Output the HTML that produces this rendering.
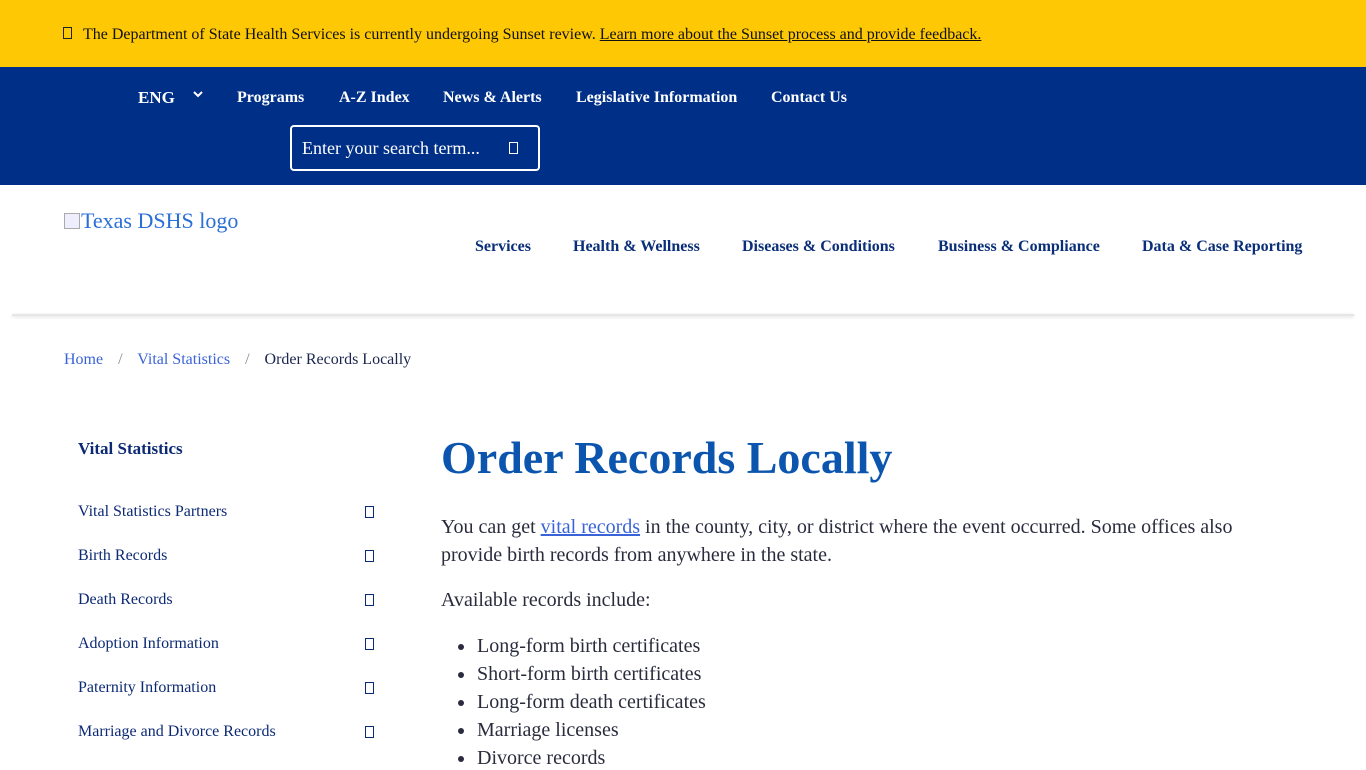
<!DOCTYPE html>
<html><head><meta charset="utf-8"><style>
*{margin:0;padding:0;box-sizing:border-box}
body{width:1366px;height:768px;overflow:hidden;font-family:"Liberation Serif",serif;background:#fff;position:relative}
.a{position:absolute;white-space:nowrap}
.box{position:absolute;width:9px;height:12px;border:1px solid currentColor}
#top{position:absolute;left:0;top:0;width:1366px;height:67px;background:#ffc805}
#nav{position:absolute;left:0;top:67px;width:1366px;height:118px;background:#002f87}
.n{color:#fff;font-weight:bold;font-size:16px;top:89px}
.m{color:#0a2f78;font-weight:bold;font-size:16px;top:238px}
.s{color:#0c2a74;font-size:16px;left:78px}
.li{font-size:20px;color:#2a2c3e;left:477px}
.dot{position:absolute;left:458px;width:6px;height:6px;border-radius:50%;background:#2a2c3e}
</style></head><body>
<div id="top"></div>
<div class="box" style="left:63px;top:27px;color:#222"></div>
<div class="a" style="left:83px;top:26px;font-size:16px;color:#111">The Department of State Health Services is currently undergoing Sunset review. <u>Learn more about the Sunset process and provide feedback.</u></div>
<div id="nav"></div>
<div class="a n" style="left:138px;top:88px;font-size:17px">ENG</div>
<svg class="a" style="left:193px;top:91px" width="10" height="8"><path d="M1 1l4 4 4-4" stroke="#fff" stroke-width="2" fill="none"/></svg>
<div class="a n" style="left:237px">Programs</div>
<div class="a n" style="left:339px">A-Z Index</div>
<div class="a n" style="left:443px">News &amp; Alerts</div>
<div class="a n" style="left:576px">Legislative Information</div>
<div class="a n" style="left:771px">Contact Us</div>
<div class="a" style="left:290px;top:125px;width:250px;height:46px;border:2px solid #fff;border-radius:4px"></div>
<div class="a" style="left:302px;top:138px;font-size:18px;color:#fff">Enter your search term...</div>
<div class="box" style="left:509px;top:142px;color:#fff"></div>
<div class="a" style="left:64px;top:208px;font-size:22px;color:#2a6fd6"><span style="display:inline-block;width:16px;height:16px;border:1px solid #aaa;background:#eef;vertical-align:-1px;margin-right:1px"></span>Texas DSHS logo</div>
<div class="a m" style="left:475px">Services</div>
<div class="a m" style="left:573px">Health &amp; Wellness</div>
<div class="a m" style="left:742px">Diseases &amp; Conditions</div>
<div class="a m" style="left:938px">Business &amp; Compliance</div>
<div class="a m" style="left:1142px">Data &amp; Case Reporting</div>
<div class="a" style="left:12px;top:314px;width:1342px;height:2px;background:#e6e6e6;box-shadow:0 1px 3px rgba(0,0,0,.15)"></div>
<div class="a" style="left:64px;top:351px;font-size:16px;color:#3a63d8">Home <span style="color:#888;margin:0 11px">/</span> Vital Statistics <span style="color:#888;margin:0 11px">/</span> <span style="color:#1b2550">Order Records Locally</span></div>
<div class="a" style="left:78px;top:439px;font-size:17px;font-weight:bold;color:#0c2a74">Vital Statistics</div>
<div class="a s" style="top:503px">Vital Statistics Partners</div>
<div class="a s" style="top:547px">Birth Records</div>
<div class="a s" style="top:591px">Death Records</div>
<div class="a s" style="top:635px">Adoption Information</div>
<div class="a s" style="top:679px">Paternity Information</div>
<div class="a s" style="top:723px">Marriage and Divorce Records</div>
<div class="box" style="left:365px;top:506px;color:#0c2a74"></div>
<div class="box" style="left:365px;top:550px;color:#0c2a74"></div>
<div class="box" style="left:365px;top:594px;color:#0c2a74"></div>
<div class="box" style="left:365px;top:638px;color:#0c2a74"></div>
<div class="box" style="left:365px;top:682px;color:#0c2a74"></div>
<div class="box" style="left:365px;top:726px;color:#0c2a74"></div>
<div class="a" style="left:441px;top:431px;font-size:46px;font-weight:bold;color:#0b55ae">Order Records Locally</div>
<div class="a" style="left:441px;top:513px;font-size:20px;line-height:28px;color:#2a2c3e;white-space:normal;width:800px">You can get <u style="color:#3a63d8">vital records</u> in the county, city, or district where the event occurred. Some offices also provide birth records from anywhere in the state.</div>
<div class="a" style="left:441px;top:589px;font-size:20px;color:#2a2c3e">Available records include:</div>
<div class="dot" style="top:644px"></div><div class="a li" style="top:635px">Long-form birth certificates</div>
<div class="dot" style="top:672px"></div><div class="a li" style="top:663px">Short-form birth certificates</div>
<div class="dot" style="top:700px"></div><div class="a li" style="top:691px">Long-form death certificates</div>
<div class="dot" style="top:728px"></div><div class="a li" style="top:719px">Marriage licenses</div>
<div class="dot" style="top:756px"></div><div class="a li" style="top:747px">Divorce records</div>
</body></html>
